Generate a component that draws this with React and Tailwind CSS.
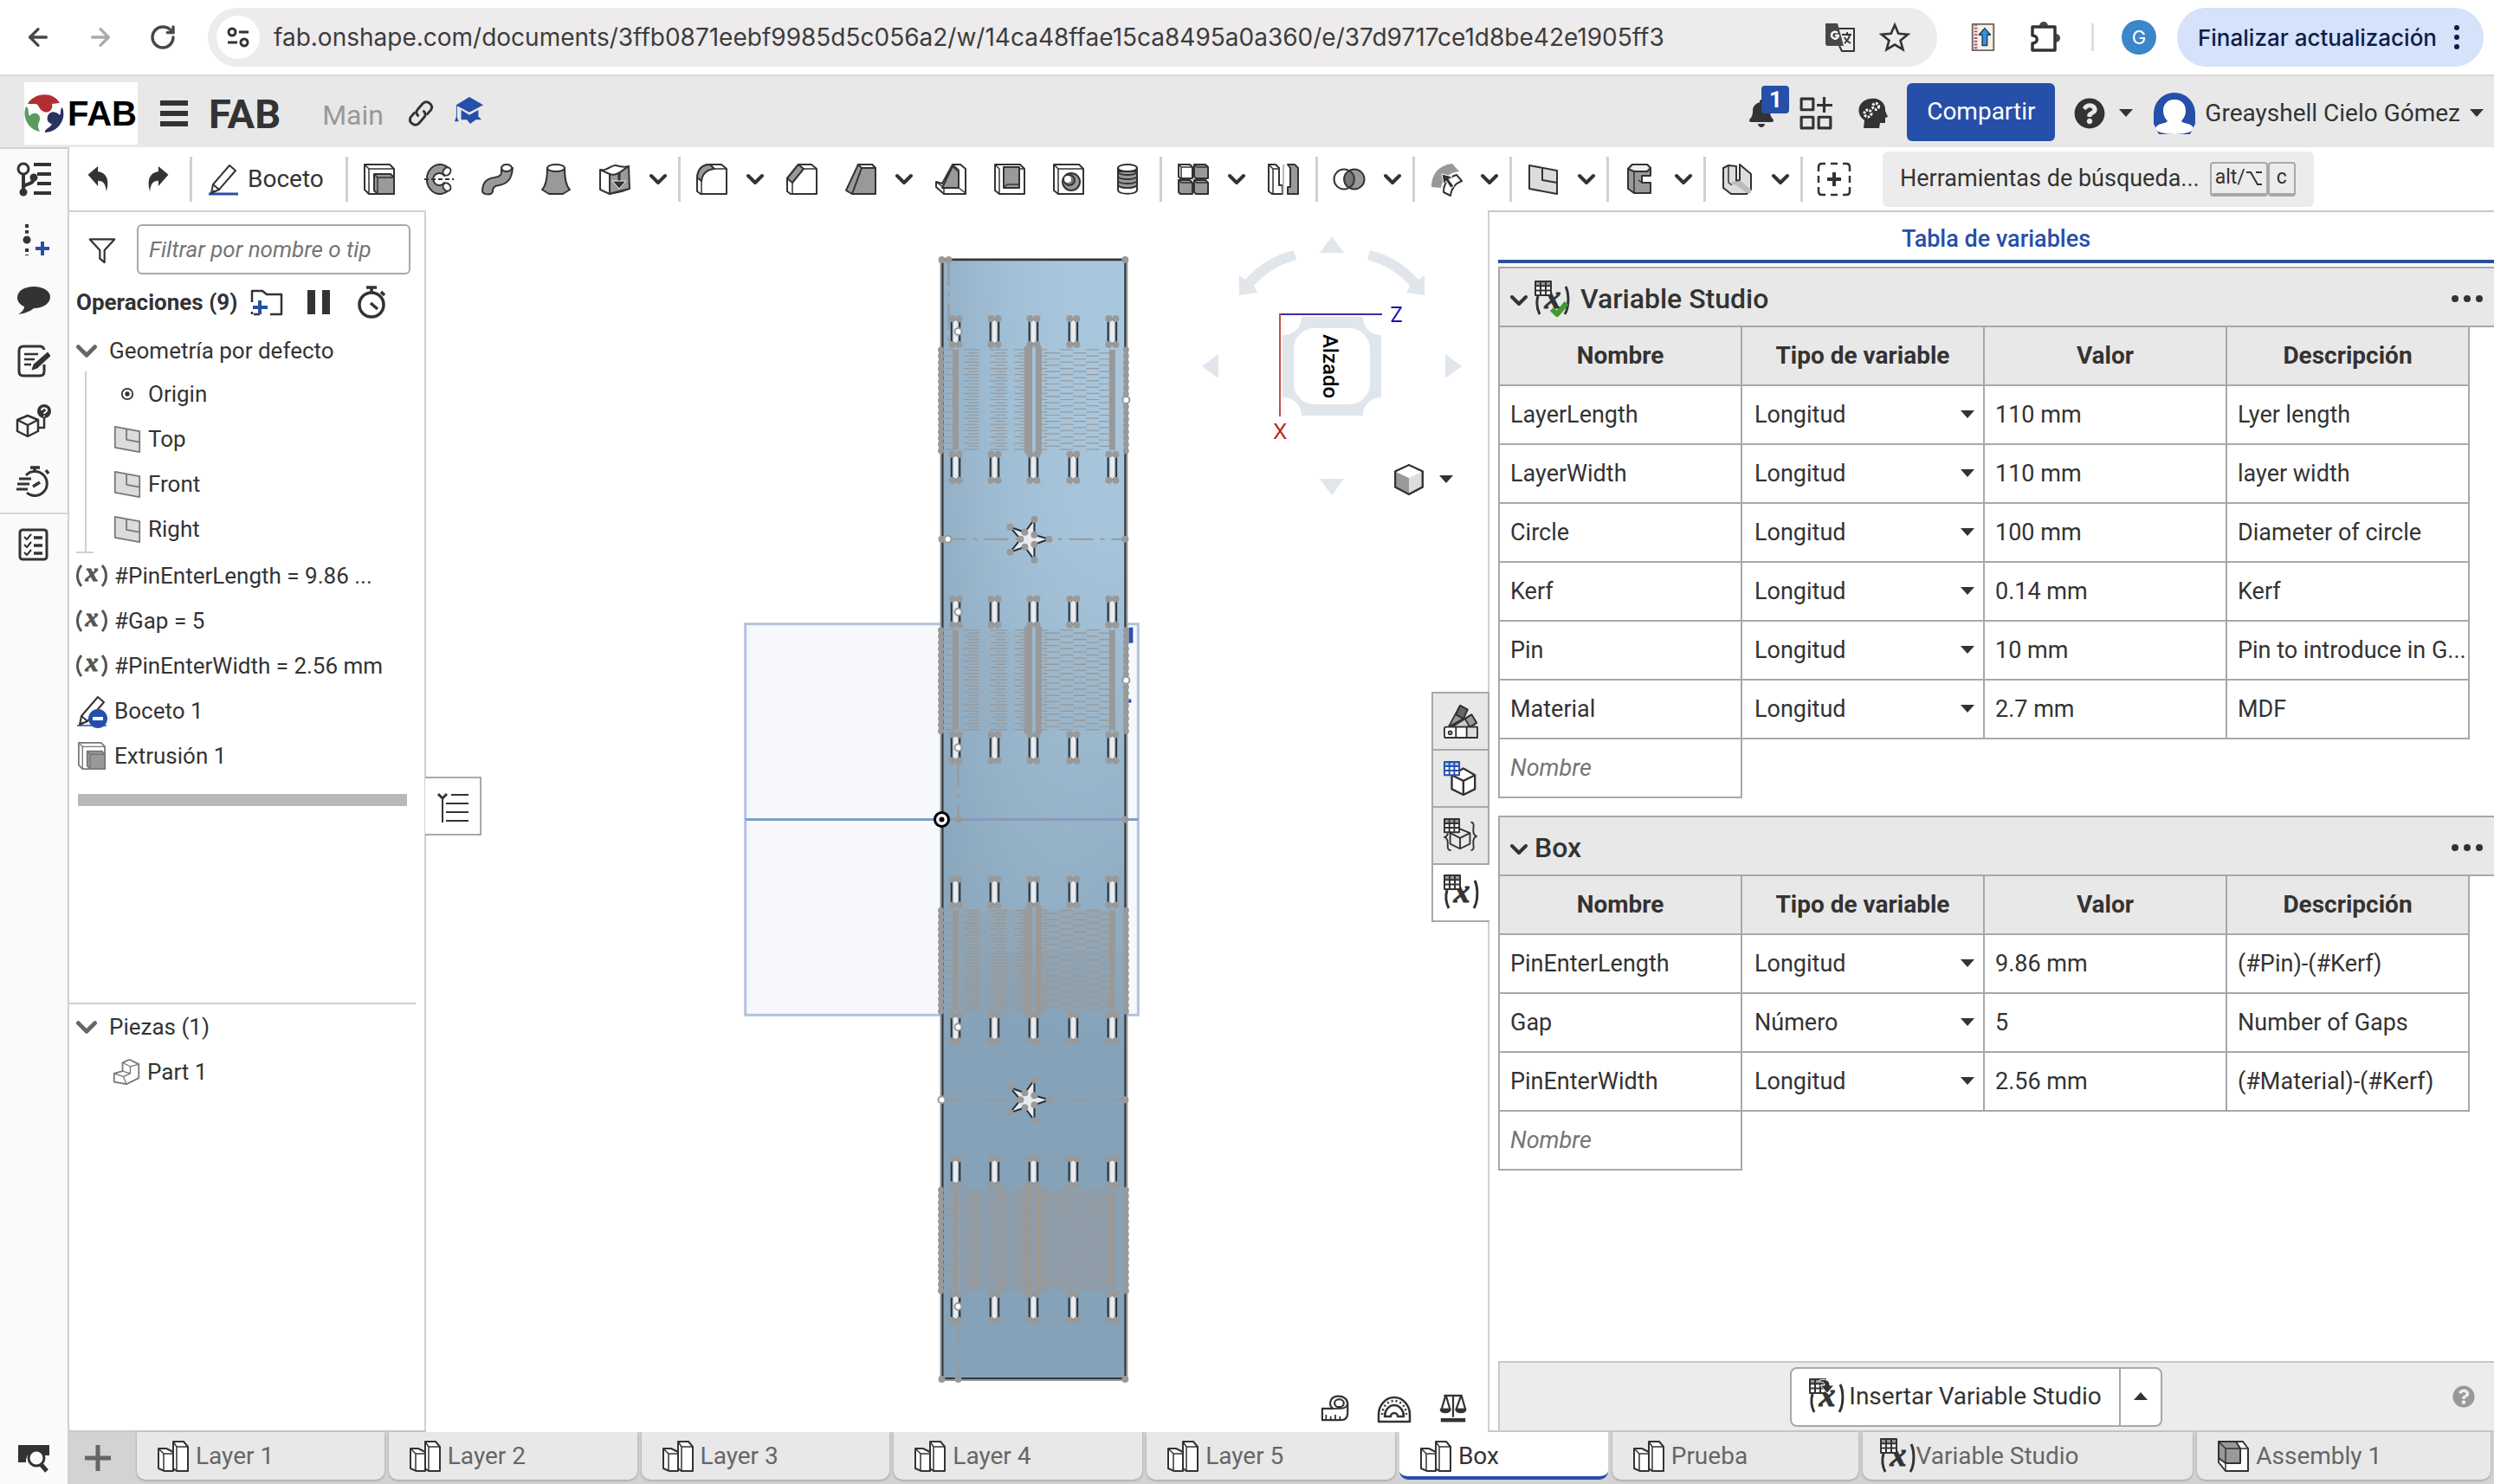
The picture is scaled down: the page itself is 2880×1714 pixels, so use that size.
import React from "react";
import { ArrowLeft, ArrowRight, RotateCw } from "lucide-react";
import { FaBell, FaQuestionCircle } from "react-icons/fa";

const INK = "#333333";

/* ---------- small shared glyphs ---------- */

function Icon({ box = "0 0 36 36", className = "size-9", sw = 2, children }) {
  return (
    <svg viewBox={box} className={`${className} shrink-0 overflow-visible`} fill="none" stroke={INK} strokeWidth={sw} strokeLinejoin="round" aria-hidden="true">
      {children}
    </svg>
  );
}

function Caret({ up = false }) {
  return (
    <svg viewBox="0 0 16 10" className="h-[10px] w-4 shrink-0" fill={INK} aria-hidden="true">
      <path d={up ? "M0 9 8 0l8 9z" : "M0 0h16L8 9z"} />
    </svg>
  );
}

function Chevron({ className = "w-5", color = INK }) {
  return (
    <svg viewBox="0 0 20 14" className={`${className} shrink-0`} fill="none" stroke={color} strokeWidth="4" strokeLinecap="round" strokeLinejoin="round" aria-hidden="true">
      <path d="M2 3l8 8 8-8" />
    </svg>
  );
}

function XGlyph() {
  return (
    <svg viewBox="0 0 36 36" className="size-9 shrink-0 overflow-visible" fill="none" stroke="#555" strokeWidth="3" aria-hidden="true">
      <path d="M6 6C0 13 0 23 6 30M30 6c6 7 6 17 0 24" />
      <text x="18" y="24" textAnchor="middle" fontFamily="Liberation Serif, serif" fontStyle="italic" fontWeight="700" fontSize="30" fill="#555" stroke="#555" strokeWidth="1">x</text>
    </svg>
  );
}

function Grid({ blue = false }) {
  const c = blue ? "#264faa" : INK;
  return (
    <g>
      <rect x="1" y="1" width="18" height="16" fill="#fff" stroke="none" />
      <rect x="1" y="1" width="18" height="5" fill={blue ? "#9fc4f7" : "#999"} stroke="none" />
      <path d="M1 1h18v16H1zM1 6.300h18M1 11.600h18M7 1v16M13 1v16" stroke={c} strokeWidth="2" />
    </g>
  );
}

function VarStudioIcon({ check = false, insert = false }) {
  return (
    <Icon box="0 0 42 42" className="size-[42px]" sw={3}>
      <path d="M4 18c-2 7-1 15 2 21M36 7c4 8 4 24-1 32" />
      <text x="21" y="32" textAnchor="middle" fontFamily="Liberation Serif, serif" fontStyle="italic" fontWeight="700" fontSize="38" fill={INK} stroke={INK} strokeWidth="1">x</text>
      <Grid />
      {insert && <path d="M12 2c8-2 12 1 12 6h5l-8 9-8-9h5c0-3-2-4-6-4z" fill={INK} stroke="#fff" strokeWidth="1" />}
      {check && <path d="M20 33l6 6 11-13" stroke="#3f9a2f" strokeWidth="6" />}
    </Icon>
  );
}

function PlaneIcon({ className = "size-9", color = INK }) {
  return (
    <Icon className={className}>
      <g stroke={color}>
        <path d="M2 2l32 6v27L2 29z" fill="#dcdcdc" />
        <path d="M17 5v14l17 3" />
      </g>
    </Icon>
  );
}

function ExtrudeIcon({ className = "size-9", color = INK }) {
  return (
    <Icon className={className}>
      <g stroke={color}>
        <path d="M1 1h29l5 5v29H6l-5-5z" fill="#fff" />
        <path d="M1 1l5 5h29M6 6v29" strokeWidth="1.500" />
        <path d="M12 12h19l4 4v19H16l-4-4z" fill="#999" />
        <path d="M12 12l4 4h19M16 16v19" strokeWidth="1.500" />
      </g>
    </Icon>
  );
}

function PencilIcon({ badge = false }) {
  return (
    <Icon>
      <path d="M1 35h34" stroke="#264faa" strokeWidth={badge ? 1.5 : 3} />
      <path d="M6 24L25 2l7 6-19 22-9 4z" fill="#fff" />
      <path d="M6 24l7 6M4 34l4-3" />
      {badge && (
        <g stroke="none">
          <circle cx="25" cy="27" r="11" fill="#264faa" />
          <rect x="19" y="25" width="12" height="4" fill="#fff" />
        </g>
      )}
    </Icon>
  );
}

function PartStudioIcon() {
  return (
    <Icon>
      <path d="M1 9h9l8 4v22H8l-7-3z" fill="#fff" />
      <path d="M1 9l6 6h10M7 15v19" strokeWidth="1.500" />
      <path d="M18 1h12l5 6v28H22l-4-3z" fill="#fff" />
      <path d="M18 1l4 6h12M22 7v28" strokeWidth="1.500" />
    </Icon>
  );
}

const cube = "M18 2l15 7v17l-15 8-15-8V9z";

/* ---------- toolbar ---------- */

const tools = {
  revolve: (
    <>
      <path d="M32 8A15 17 0 1 0 32 28L25 22a7 7 0 1 1 0-8z" fill="#999" />
      <ellipse cx="28" cy="9" rx="4" ry="5" transform="rotate(40 28 9)" fill="#fff" />
      <ellipse cx="28" cy="27" rx="4" ry="5" transform="rotate(-40 28 27)" fill="#fff" />
      <path d="M2 18h34" strokeDasharray="5 3" />
    </>
  ),
  sweep: (
    <>
      <path d="M23 5v5c0 4-3 5-8 6C6 17 1 22 1 32c1 4 11 5 12 0 0-5 2-6 7-7 11-2 15-8 16-20z" fill="#999" />
      <ellipse cx="29" cy="5" rx="6" ry="4" fill="#fff" />
    </>
  ),
  loft: (
    <>
      <path d="M8 5c0 12-2 21-6 25l8 5h16l8-5C30 26 28 17 28 5z" fill="#999" />
      <ellipse cx="18" cy="5" rx="10" ry="4" fill="#fff" />
    </>
  ),
  import: (
    <>
      <path d="M1 7c7 3 13-6 18-5s10 3 15 1v26l-8 3-14 3-11-5z" fill="#fff" />
      <path d="M12 12c8 3 14-4 22-9l1 26c-8 2-15 3-23 6z" fill="#999" />
      <path d="M1 7l11 5" />
      <path d="M23 10v15" strokeWidth="3" />
      <path d="M15 20h16l-8 9z" fill={INK} stroke="#fff" strokeWidth="1" />
    </>
  ),
  fillet: (
    <>
      <path d="M1 16C2 6 7 1 16 1h13l6 5v29H5l-4-3z" fill="#fff" />
      <path d="M1 16C2 6 7 1 16 1l5 5C12 7 7 12 6 20z" fill="#999" />
      <path d="M21 6h14M6 20v15" strokeWidth="1.500" />
    </>
  ),
  chamfer: (
    <>
      <path d="M1 17L14 1h15l6 5v29H5l-4-3z" fill="#fff" />
      <path d="M1 17L14 1l6 5L7 22z" fill="#999" />
      <path d="M20 6h15M7 22v13" strokeWidth="1.500" />
    </>
  ),
  draft: (
    <>
      <path d="M15 1h16l4 4v30H8l-7-4z" fill="#999" />
      <path d="M15 1h16l4 4H19z" fill="#fff" />
      <path d="M19 5L8 35" />
    </>
  ),
  rib: (
    <>
      <path d="M20 1h9l6 5v29H10l-9-8v-6l7 2z" fill="#fff" />
      <path d="M20 3l7 6v19H8z" fill="#999" />
      <path d="M1 21l9 7h17M10 28v7M27 28V7l-7-6M27 28l8 6" strokeWidth="1.500" />
    </>
  ),
  shell: (
    <>
      <path d="M1 1h29l5 5v29H6l-5-4z" fill="#fff" />
      <path d="M1 1l5 5v29M29 6h6" strokeWidth="1.500" />
      <path d="M11 4h18v24H11z" fill="#999" />
      <path d="M11 28l4-4h14" strokeWidth="1.500" />
    </>
  ),
  hole: (
    <>
      <path d="M1 1h29l5 5v29H6l-5-4z" fill="#fff" />
      <path d="M1 1l5 5h29M6 6v29" strokeWidth="1.500" />
      <circle cx="21" cy="21" r="10" fill="#999" />
      <circle cx="19" cy="19" r="6" fill="#777" />
      <circle cx="17" cy="18" r="4" fill="#fff" stroke="none" />
    </>
  ),
  thread: (
    <>
      <path d="M7 5v26c2 5 20 5 22 0V5z" fill="#fff" />
      <path d="M7 9v16c3 4 19 4 22 0V9z" fill="#999" />
      <ellipse cx="18" cy="5" rx="11" ry="4" fill="#fff" />
      <path d="M7 10c3 4 19 4 22 0M7 15c3 4 19 4 22 0M7 20c3 4 19 4 22 0M7 25c3 4 19 4 22 0" />
    </>
  ),
  pattern: (
    <>
      <path d="M1 1h13l3 3v13H3l-2-2z" fill="#fff" />
      <path d="M19 1h13l3 3v13H21l-2-2zM1 19h13l3 3v13H3l-2-2zM19 19h13l3 3v13H21l-2-2z" fill="#999" />
      <path d="M1 1l3 3h13M4 4v12M19 1l3 3h13M1 19l3 3h13M19 19l3 3h13" strokeWidth="1.500" />
    </>
  ),
  mirror: (
    <>
      <path d="M1 1h8l4 4v20h4v10H5l-4-3z" fill="#fff" />
      <path d="M1 1l5 5v29M6 6h7" strokeWidth="1.500" />
      <path d="M23 1h8l4 4v30H23v-8h3V5z" fill="#999" />
      <path d="M18 1v34" stroke="#bbb" />
    </>
  ),
  boolean: (
    <>
      <circle cx="12" cy="18" r="11.500" fill="#fff" />
      <circle cx="24" cy="18" r="11.500" fill="#999" />
      <path d="M18 8a11.500 11.500 0 0 1 0 20 11.500 11.500 0 0 1 0-20z" fill="#777" />
    </>
  ),
  moveFace: (
    <>
      <path d="M1 27C1 12 9 2 25 0l8 9C22 10 14 17 12 28z" fill="#999" stroke="none" />
      <path d="M15 33c0-10 5-17 15-20l6 7c-8 3-12 8-13 17z" fill="#fff" />
      <path d="M13 12l12 3-4 3 6 8-4 2-5-8-3 4z" fill={INK} stroke="#fff" strokeWidth="1" />
    </>
  ),
  frame: (
    <>
      <path d="M4 6l5-5h17l4 4v9H20v8h10v12H11l-7-5z" fill="#999" />
      <path d="M4 6l5-5h17l4 4-4 4H11z" fill="#eee" />
      <path d="M11 9v26M20 22l-4-3" strokeWidth="1.500" />
    </>
  ),
  sheet: (
    <>
      <path d="M2 5l6-3 9 1v17l4-1V1l13 11v18l-5 5H11L2 28z" fill="#ddd" />
      <path d="M8 3v19l13-3 13 11v4h-5L17 25l-9-3z" fill="#bbb" stroke="none" />
      <path d="M8 3v19l4 3M21 19l-4 1M21 1v18" strokeWidth="1.500" />
    </>
  ),
};

function Tool({ name, label, children }) {
  return (
    <button type="button" aria-label={label} className="flex h-full w-[68px] shrink-0 items-center justify-center">
      {children ?? <Icon>{tools[name]}</Icon>}
    </button>
  );
}

function Drop({ label = "Más opciones" }) {
  return (
    <button type="button" aria-label={label} className="flex h-full w-9 shrink-0 items-center justify-center pr-1">
      <Chevron />
    </button>
  );
}

function Sep() {
  return (
    <div className="flex h-[52px] w-2 shrink-0 justify-center">
      <div className="w-[3px] bg-[#d0d0d0]" />
    </div>
  );
}

function Toolbar() {
  return (
    <div className="flex h-[73px] shrink-0 items-center bg-white text-[28px] text-[#333]">
      <Tool label="Deshacer">
        <Icon sw={0} className="size-8">
          <path d="M4 12L17 1v7c12 2 15 12 11 26-1-10-4-14-11-14v7z" fill={INK} />
        </Icon>
      </Tool>
      <Tool label="Rehacer">
        <Icon sw={0} className="size-8">
          <path d="M32 12L19 1v7C7 10 4 20 8 34c1-10 4-14 11-14v7z" fill={INK} />
        </Icon>
      </Tool>
      <Sep />
      <button type="button" className="flex h-full w-[172px] shrink-0 items-center gap-[10px] pl-4">
        <PencilIcon />
        Boceto
      </button>
      <Sep />
      <Tool label="Extruir"><ExtrudeIcon /></Tool>
      <Tool name="revolve" label="Revolución" />
      <Tool name="sweep" label="Barrido" />
      <Tool name="loft" label="Solevación" />
      <Tool name="import" label="Engrosar" />
      <Drop />
      <Sep />
      <Tool name="fillet" label="Empalme" />
      <Drop />
      <Tool name="chamfer" label="Chaflán" />
      <Tool name="draft" label="Ángulo de salida" />
      <Drop />
      <Tool name="rib" label="Nervio" />
      <Tool name="shell" label="Vaciado" />
      <Tool name="hole" label="Taladro" />
      <Tool name="thread" label="Rosca" />
      <Sep />
      <Tool name="pattern" label="Matriz" />
      <Drop />
      <Tool name="mirror" label="Simetría" />
      <Sep />
      <Tool name="boolean" label="Booleana" />
      <Drop />
      <Sep />
      <Tool name="moveFace" label="Mover cara" />
      <Drop />
      <Sep />
      <Tool label="Plano"><PlaneIcon /></Tool>
      <Drop />
      <Sep />
      <Tool name="frame" label="Viga" />
      <Drop />
      <Sep />
      <Tool name="sheet" label="Chapa metálica" />
      <Drop />
      <Sep />
      <Tool label="Añadir operación personalizada">
        <Icon box="0 0 40 40" className="size-10" sw={3}>
          <path d="M2 11V6q0-4 4-4h4M16 2h8M30 2h4q4 0 4 4v5M38 16v8M38 29v5q0 4-4 4h-4M24 38h-8M10 38H6q-4 0-4-4v-5M2 24v-8" strokeWidth="2.500" />
          <path d="M12 20h16M20 12v16" strokeWidth="4" />
        </Icon>
      </Tool>
      <button type="button" className="ml-[22px] flex h-16 w-[498px] shrink-0 items-center whitespace-nowrap rounded-md bg-[#ececec] pl-5 text-[27px]">
        <span>Herramientas de búsqueda...</span>
        <kbd className="ml-3 flex h-10 items-center rounded border-2 border-b-4 border-[#a8a8a8] px-1 font-[Roboto,sans-serif] text-[23px]">
          alt/
          <Icon box="0 0 20 20" className="size-5">
            <path d="M1 3h5l8 14h5M12 3h7" />
          </Icon>
        </kbd>
        <kbd className="flex h-10 w-8 items-center justify-center rounded border-2 border-b-4 border-[#a8a8a8] font-[Roboto,sans-serif] text-[23px]">c</kbd>
      </button>
    </div>
  );
}

/* ---------- browser chrome and document header ---------- */

function BrowserBar() {
  return (
    <div className="flex h-[88px] shrink-0 items-center border-b-2 border-[#dadada] bg-white font-[Inter,sans-serif]">
      <nav className="flex items-center gap-10 pl-7" aria-label="Navegador">
        <button type="button" aria-label="Atrás"><ArrowLeft className="size-8 text-[#474747]" strokeWidth={2.5} /></button>
        <button type="button" aria-label="Adelante"><ArrowRight className="size-8 text-[#aaa]" strokeWidth={2.5} /></button>
        <button type="button" aria-label="Recargar"><RotateCw className="size-8 text-[#474747]" strokeWidth={2.5} /></button>
      </nav>
      <div className="ml-9 flex h-[68px] grow items-center rounded-full bg-[#edebec] pl-[10px] pr-8">
        <button type="button" aria-label="Información del sitio" className="flex size-[50px] items-center justify-center rounded-full bg-white">
          <Icon box="0 0 26 26" className="size-[26px]" sw={3}>
            <circle cx="6" cy="7" r="4" />
            <path d="M14 7h11M1 19h11" />
            <circle cx="20" cy="19" r="4" />
          </Icon>
        </button>
        <input
          aria-label="Dirección"
          className="ml-4 min-w-0 grow bg-transparent text-[28px] text-[#3c3c3c] outline-none"
          defaultValue="fab.onshape.com/documents/3ffb0871eebf9985d5c056a2/w/14ca48ffae15ca8495a0a360/e/37d9717ce1d8be42e1905ff3"
        />
        <button type="button" aria-label="Traducir" className="mr-7">
          <Icon>
            <path d="M16 8h18v26H20l-3-6" />
            <path d="M1 2h14l7 26H4q-3 0-3-3z" fill="#474747" stroke="none" />
            <path d="M15 13a4 4 0 1 0 1 3h-4" stroke="#fff" strokeWidth="2.500" />
            <path d="M20 15h11M26 12v3M29 15c-1 6-4 8-6 10M23 18c1 3 4 5 7 7" strokeWidth="1.800" />
          </Icon>
        </button>
        <button type="button" aria-label="Añadir a favoritos">
          <Icon className="size-[34px]" sw={2.800}>
            <path d="M18 3l4.500 10.500L34 14.500l-9 7.500 3 11-10-6-10 6 3-11-9-7.500 11.500-1z" strokeLinejoin="miter" />
          </Icon>
        </button>
      </div>
      <button type="button" aria-label="Extensión" className="ml-9">
        <Icon className="size-[34px]">
          <path d="M5 2h26v32H5z" fill="#f7f1df" stroke="#666" />
          <path d="M9 2v32" stroke="#b14d7b" strokeDasharray="2 2" strokeWidth="4" />
          <path d="M20 7l7 8h-4v13h-6V15h-4z" fill="#3d8fe0" stroke="#1c3d6b" strokeWidth="1.500" />
        </Icon>
      </button>
      <button type="button" aria-label="Extensiones" className="ml-9">
        <Icon className="size-9" sw={3.500}>
          <path d="M4 6h26v27H4v-8c7 0 7-9 0-9z" />
          <path d="M12 5a5 5 0 0 1 10 0zM31 14a5 5 0 0 1 0 10z" fill="#474747" stroke="none" />
        </Icon>
      </button>
      <div className="ml-9 h-8 w-[3px] bg-[#dedede]" />
      <button type="button" aria-label="Perfil" className="ml-8 flex size-10 items-center justify-center rounded-full bg-[#3c86cc] text-[22px] text-white">G</button>
      <button type="button" className="ml-6 mr-3 flex h-[68px] items-center gap-5 whitespace-nowrap rounded-full bg-[#d6e1fa] pl-6 pr-7 text-[26px] font-medium text-[#0b1d4a]">
        Finalizar actualización
        <svg viewBox="0 0 6 28" className="h-7 w-[6px]" fill="#0b1d4a" aria-hidden="true">
          <circle cx="3" cy="3" r="3" /><circle cx="3" cy="14" r="3" /><circle cx="3" cy="25" r="3" />
        </svg>
      </button>
    </div>
  );
}

function DocumentHeader() {
  return (
    <header className="flex h-[82px] shrink-0 items-center bg-[#e8e8e8] pt-1 text-[#333]">
      <a href="#inicio" aria-label="Fab" className="ml-7 flex h-[72px] w-[131px] shrink-0 items-center bg-white">
        <svg viewBox="0 0 46 46" className="size-[46px] shrink-0" aria-hidden="true">
          <circle cx="23" cy="23" r="22" fill="#fff" />
          <path d="M4 12C12-2 34-2 41 11l-9 1c2 8-6 12-11 8-5-3-4-9-9-8z" fill="#b02f33" />
          <path d="M2 15c4 1 2 8 4 11 5-6 13-3 12 4-1 5-4 6 0 14C5 42-3 28 2 15z" fill="#5d9a5f" />
          <path d="M44 16c5 13-4 28-20 29-1-4 6-5 8-10-6-1-7-8-3-12 5-4 10 0 12 2 2-3 0-7 3-9z" fill="#27325f" />
        </svg>
        <span className="pl-1 font-[Liberation_Sans,sans-serif] text-[40px] font-bold leading-none text-black">FAB</span>
      </a>
      <button type="button" aria-label="Menú" className="ml-[26px] flex w-8 shrink-0 flex-col gap-[6px]">
        <span className="h-[6px] bg-[#333]" />
        <span className="h-[6px] bg-[#333]" />
        <span className="h-[6px] bg-[#333]" />
      </button>
      <h1 className="ml-6 text-[47px] font-bold leading-none">FAB</h1>
      <span className="ml-12 pt-1 text-[32px] text-[#999]">Main</span>
      <button type="button" aria-label="Enlace" className="ml-7">
        <Icon className="size-[30px]" sw={3.500}>
          <path d="M15 22c-4-3-4-7-1-10l7-8c6-5 15 2 11 9l-6 7" />
          <path d="M21 14c4 3 4 7 1 10l-7 8c-6 5-15-2-11-9l6-7" />
        </Icon>
      </button>
      <button type="button" aria-label="Aprendizaje" className="ml-6 pb-2">
        <Icon className="size-[34px]" sw={0}>
          <path d="M18 2l17 10-17 9L3 13v14l2 5H0l2-6V12zM8 18l10 6 11-6v8l4 4h-7l-7 5-4-5H8z" fill="#264faa" />
        </Icon>
      </button>

      <div className="ml-auto flex items-center">
        <button type="button" aria-label="Notificaciones, 1 nueva" className="relative mr-5">
          <FaBell className="size-8" />
          <span className="absolute -top-4 left-4 flex h-8 w-8 items-center justify-center rounded bg-[#264faa] text-[26px] font-bold text-white">1</span>
        </button>
        <button type="button" aria-label="Aplicaciones" className="ml-2 mr-7">
          <Icon className="size-[38px]" sw={3}>
            <path d="M2 2h13v12H2zM2 22h13v12H2zM21 22h13v12H21zM27 0v17M19 9h17" />
          </Icon>
        </button>
        <button type="button" aria-label="Asistente" className="mr-[22px]">
          <Icon className="size-9" sw={0}>
            <path d="M16 1C27-1 34 7 33 15l3 7-3 1v6h-6l-1 6H8l1-9C-3 17 3 2 16 1z" fill={INK} />
            <circle cx="13" cy="18" r="4" stroke="#fff" strokeWidth="3" strokeDasharray="2.500 1.500" />
            <circle cx="22" cy="10" r="3.500" stroke="#fff" strokeWidth="3" strokeDasharray="2.500 1.500" />
          </Icon>
        </button>
        <button type="button" className="mb-1 h-[67px] w-[171px] rounded-md bg-[#264faa] text-[28px] text-white">Compartir</button>
        <button type="button" aria-label="Ayuda" className="ml-[22px] flex items-center gap-4">
          <FaQuestionCircle className="size-9" />
          <Caret />
        </button>
        <button type="button" className="ml-6 mr-3 flex items-center gap-[11px] whitespace-nowrap text-[28px]">
          <svg viewBox="0 0 48 48" className="size-12" aria-hidden="true">
            <path d="M0 48V24a24 24 0 0 1 48 0v24z" fill="#264faa" />
            <path d="M24 8c9 0 13 6 13 13 0 6-3 9-5 12 2 3 12 2 14 8 0 4-9 7-22 7S2 45 2 41c2-6 12-5 14-8-2-3-5-6-5-12C11 14 15 8 24 8z" fill="#fff" />
            <path d="M0 36v12h6zM48 36v12h-6z" fill="#e8e8e8" />
          </svg>
          Greayshell Cielo Gómez
          <Caret />
        </button>
      </div>
    </header>
  );
}

/* ---------- left rail ---------- */

function RailButton({ label, children }) {
  return (
    <button type="button" aria-label={label} className="flex h-[70px] w-full shrink-0 items-center justify-center">
      <Icon className="size-10" box="0 0 40 40" sw={3}>{children}</Icon>
    </button>
  );
}

function Rail() {
  return (
    <aside className="flex w-20 shrink-0 flex-col border-r-2 border-t-2 border-[#d0d0d0] bg-[#fafafa]">
      <RailButton label="Árbol">
        <circle cx="8" cy="8" r="6" />
        <path d="M8 14v20M8 30c0-6 12-2 12-12M20 3h20M24 14h16M24 25h16M20 36h20" strokeWidth="4" />
        <circle cx="8" cy="35" r="3" fill={INK} />
        <circle cx="20" cy="18" r="3" fill={INK} />
      </RailButton>
      <RailButton label="Crear versión">
        <path d="M12 2v36" strokeDasharray="4 3" strokeWidth="4" />
        <circle cx="12" cy="20" r="6" fill={INK} stroke="#fafafa" />
        <path d="M22 30h16M30 22v16" stroke="#264faa" strokeWidth="4" />
      </RailButton>
      <RailButton label="Comentarios">
        <path d="M20 4c11 0 19 5 19 12s-8 13-19 13c-3 3-10 6-18 7 5-3 7-6 7-9-5-2-8-6-8-10C1 9 9 4 20 4z" fill={INK} stroke="none" />
      </RailButton>
      <RailButton label="Notas">
        <path d="M32 24v8q0 5-5 5H8q-5 0-5-5V8q0-5 5-5h19q4 0 5 4" />
        <path d="M9 12h16M9 18h12M9 24h8" strokeWidth="2.500" />
        <path d="M36 10l3 4-15 14-6 2 2-6z" fill={INK} strokeWidth="1" />
      </RailButton>
      <RailButton label="Ayuda de pieza">
        <path d="M13 13l12 5v13l-12 6-12-6V18zM1 18l12 6 12-6M13 24v13" strokeWidth="2.500" />
        <circle cx="32" cy="8" r="8" fill={INK} stroke="none" />
        <path d="M29 7c0-4 7-3 6 0 0 2-3 2-3 4M32 13v1" stroke="#fff" strokeWidth="2" />
        <path d="M32 16v11h-6" strokeWidth="2.500" />
      </RailButton>
      <RailButton label="Rendimiento">
        <path d="M11 12a14 14 0 1 1 1 20M3 16h14M1 22h14M0 28h13" />
        <path d="M16 3h11M21 3v5M34 6l3 4M19 25l8-5" strokeWidth="3.500" />
      </RailButton>
      <div className="border-b-2 border-[#d8d8d8]" />
      <RailButton label="Lista de comprobación">
        <rect x="4" y="3" width="31" height="34" rx="3" />
        <path d="M9 11l3 3 5-6M9 20l3 3 5-6M9 29l3 3 5-6" strokeWidth="2" />
        <path d="M20 12h10M20 21h10M20 30h10" strokeWidth="3.500" />
      </RailButton>
      <div className="mt-auto pt-2">
        <RailButton label="Buscar en el espacio de trabajo">
          <path d="M2 10h36v12h-5a12 12 0 0 0-22 8H2z" fill={INK} stroke="none" />
          <circle cx="23" cy="25" r="9" />
          <path d="M28 32l7 8" strokeWidth="5" />
        </RailButton>
      </div>
    </aside>
  );
}

/* ---------- feature panel ---------- */

function Feature({ icon, children }) {
  return (
    <li className="flex h-[52px] items-center gap-2 whitespace-nowrap">
      {icon}
      <span>{children}</span>
    </li>
  );
}

function FeaturePanel() {
  return (
    <section className="flex w-[412px] shrink-0 flex-col border-y-2 border-r-2 border-[#d0d0d0] border-b-[#c8c8c8] bg-white text-[26px] text-[#333]">
      <div className="flex items-center gap-6 pl-[22px] pr-4 pt-[14px]">
        <Icon className="size-8">
          <path d="M2 5h32L21 19v16l-6-5V19z" strokeWidth="2.500" />
        </Icon>
        <input
          aria-label="Filtrar por nombre o tipo"
          placeholder="Filtrar por nombre o tipo"
          className="h-[58px] min-w-0 grow rounded-md border-2 border-[#a8a8a8] bg-white pl-3 pr-11 text-[26px] italic placeholder:text-[#757575]"
        />
      </div>
      <div className="flex h-16 items-center pl-2">
        <h2 className="text-[26px] font-bold">Operaciones (9)</h2>
        <button type="button" aria-label="Nueva carpeta" className="ml-4">
          <Icon className="size-9" sw={2.500}>
            <path d="M1 18V5h12l5 4h17v23H22M1 32v-3M10 32h-7" />
            <path d="M2 24h17M10 16v16" stroke="#264faa" strokeWidth="4" />
          </Icon>
        </button>
        <button type="button" aria-label="Pausar" className="ml-[29px] flex gap-2">
          <span className="h-[28px] w-[9px] bg-[#333]" />
          <span className="h-[28px] w-[9px] bg-[#333]" />
        </button>
        <button type="button" aria-label="Tiempos" className="ml-7">
          <Icon className="size-10" box="0 0 40 40" sw={3.500}>
            <circle cx="20" cy="23" r="14" />
            <path d="M14 3h12M20 3v6M31 8l4 4M19 21l8 7" />
          </Icon>
        </button>
      </div>
      <ul className="pl-2">
        <li>
          <div className="flex h-12 items-center gap-[14px]">
            <Chevron className="w-6" color="#666" />
            <span>Geometría por defecto</span>
          </div>
          <ul className="ml-[10px] border-l-2 border-[#d0d0d0] pl-[31px]">
            <Feature
              icon={
                <Icon className="size-8" sw={2}>
                  <circle cx="18" cy="18" r="7" /><circle cx="18" cy="18" r="2" fill={INK} />
                </Icon>
              }
            >
              Origin
            </Feature>
            <Feature icon={<PlaneIcon className="size-8" color="#777" />}>Top</Feature>
            <Feature icon={<PlaneIcon className="size-8" color="#777" />}>Front</Feature>
            <Feature icon={<PlaneIcon className="size-8" color="#777" />}>Right</Feature>
          </ul>
          <div className="w-5 border-t-2 border-[#d0d0d0]" />
        </li>
        <Feature icon={<XGlyph />}>#PinEnterLength = 9.86 ...</Feature>
        <Feature icon={<XGlyph />}>#Gap = 5</Feature>
        <Feature icon={<XGlyph />}>#PinEnterWidth = 2.56 mm</Feature>
        <Feature icon={<PencilIcon badge />}>Boceto 1</Feature>
        <Feature icon={<ExtrudeIcon className="mx-[2px] size-8" color="#777" />}>Extrusión 1</Feature>
      </ul>
      <div className="ml-[10px] mr-5 mt-[18px] h-[14px] bg-[#b8b8b8]" />
      <div className="mr-[10px] mt-auto h-[494px] border-t-2 border-[#d0d0d0] pl-2">
        <div className="flex h-[52px] items-center gap-[14px]">
          <Chevron className="w-6" color="#666" />
          <h2>Piezas (1)</h2>
        </div>
        <div className="flex h-[52px] items-center gap-2 pl-[42px]">
          <Icon className="size-8">
            <path d="M2 20l11-3V6l9-4 12 6v18L18 34 2 31z" stroke="#777" />
            <path d="M13 6l10 5 11-3M23 11v9l-10-3M23 20L14 24 2 20M14 24l4 10" stroke="#777" strokeWidth="1.500" />
          </Icon>
          <span>Part 1</span>
        </div>
      </div>
    </section>
  );
}

/* ---------- 3D canvas ---------- */

const SLOT_X = [1104, 1149, 1194, 1240, 1285];
const BANDS = [367, 691, 1015, 1338];
const HANDLES = [[1107, 382], [1301, 461], [1095, 622], [1107, 706], [1301, 785], [1107, 863], [1107, 1186], [1088, 1270], [1107, 1509]];
const CORNERS = [[1088, 299], [1096, 299], [1300, 299], [1088, 1593], [1107, 1593], [1300, 1593], [1300, 622], [1300, 946], [1300, 1270], [1107, 946], [1088, 622]];
const STAR_OUT = [[8, -23], [-20, -14], [-20, 15], [8, 24], [25, 0]];
const STAR_IN = [[-3, -8], [-8, 0], [-3, 9], [8, 6], [8, -5]];

function Slot({ x, y }) {
  return (
    <g>
      <rect x={x - 5} y={y} width="10" height="30" fill="#5f7584" />
      <path d={`M${x - 5} ${y}v30M${x + 5} ${y}v30`} stroke="#1f2a33" strokeWidth="1.500" />
      <rect x={x - 3} y={y + 2} width="6" height="26" rx="2" fill="#e9ebee" />
      {[0, 30].map((d) => (
        <g key={d} fill="#999">
          <circle cx={x - 4} cy={y + d} r="4" />
          <circle cx={x + 4} cy={y + d} r="4" />
        </g>
      ))}
    </g>
  );
}

function Band({ y, density }) {
  const rows = Array.from({ length: 33 }, (_, i) => i);
  return (
    <g stroke="#999" strokeWidth={1.2 + density * 0.5}>
      <rect x="1110" y={y} width="172" height="116" fill="#999" stroke="none" opacity={density * 0.25} />
      {rows.map((i) => {
        const r = y + i * 3.6;
        return i % 2 === 0 ? (
          <path key={i} d={`M1092 ${r}h10M1113 ${r}h18M1144 ${r}h20M1172 ${r}h14M1203 ${r}h7M1225 ${r}h15M1255 ${r}h15`} />
        ) : (
          <path key={i} d={`M1119 ${r}h12M1150 ${r}h12M1178 ${r}h8M1206 ${r}h19M1240 ${r}h15M1270 ${r}h14`} />
        );
      })}
      <path d={`M1104 ${y}v116`} strokeWidth="7" />
      <path d={`M1188 ${y - 4}v124`} strokeWidth="9" />
      <path d={`M1200 ${y - 4}v124`} strokeWidth="7" />
      <path d={`M1285 ${y}v116`} strokeWidth="7" />
      {[1087, 1301].map((x) => (
        <g key={x}>
          <path d={`M${x} ${y}v116`} strokeWidth="5" />
          <path d={`M${x} ${y}v117`} strokeWidth="7" strokeLinecap="round" strokeDasharray="0.100 7.200" />
        </g>
      ))}
    </g>
  );
}

function Star({ x, y }) {
  const pts = STAR_OUT.flatMap((p, i) => [p, STAR_IN[i]]);
  return (
    <g transform={`translate(${x} ${y})`}>
      <polygon points={pts.map((p) => p.join(",")).join(" ")} fill="#e9ebee" stroke="#22303a" strokeWidth="2" />
      {STAR_OUT.concat(STAR_IN).map(([cx, cy]) => (
        <circle key={`${cx} ${cy}`} cx={cx} cy={cy} r="4" fill="#999" />
      ))}
    </g>
  );
}

function Model() {
  return (
    <svg viewBox="492 243 1227 1410" className="block h-full w-full" role="img" aria-label="Pieza Box">
      <defs>
        <linearGradient id="plateFill" x1="1300" y1="299" x2="1180" y2="1200" gradientUnits="userSpaceOnUse">
          <stop offset="0" stopColor="#a9c8df" />
          <stop offset="0.350" stopColor="#a6c4da" />
          <stop offset="1" stopColor="#86a2b8" />
        </linearGradient>
        <linearGradient id="plateShade" x1="0" x2="1" y1="0" y2="0">
          <stop offset="0" stopColor="#86a2b8" stopOpacity="0.600" />
          <stop offset="1" stopColor="#aecbe0" stopOpacity="0" />
        </linearGradient>
      </defs>
      <rect x="861" y="720" width="454" height="452" fill="#f6f8fb" stroke="#b4c2de" strokeWidth="3" />
      <rect x="1304" y="724" width="5" height="18" fill="#2f4fae" />
      <rect x="1303" y="807" width="4" height="4" fill="#2f4fae" />
      <rect x="1088" y="299" width="213" height="1294" fill="url(#plateFill)" />
      <rect x="1088" y="299" width="213" height="800" fill="url(#plateShade)" />
      <path d="M1088 299h213v1294h-213z" fill="none" stroke="#999" strokeWidth="4" />
      <path d="M1089 299h211v1293h-211z" fill="none" stroke="#2c3a45" strokeWidth="2" />
      <path d="M861 946h454" stroke="#7f9dca" strokeWidth="3" />
      <g stroke="#999" strokeWidth="2">
        <path d="M1088 622h212M1088 1270h212M1095 946h206" strokeDasharray="28 8 5 8" />
        <path d="M1096 299v100M1107 878v68M1107 1525v68" strokeDasharray="30 8 5 8" />
      </g>
      {BANDS.map((y, i) => <Band key={y} y={y + 36} density={[0, 0.3, 1, 1.4][i]} />)}
      {BANDS.map((y) => SLOT_X.map((x) => (
        <g key={`${x} ${y}`}>
          <Slot x={x} y={y} />
          <Slot x={x} y={y + 157} />
        </g>
      )))}
      <Star x={1187} y={622} />
      <Star x={1187} y={1270} />
      {CORNERS.map(([x, y]) => <circle key={`${x} ${y}`} cx={x} cy={y} r="4" fill="#999" />)}
      {HANDLES.map(([x, y]) => <circle key={`${x} ${y}`} cx={x} cy={y} r="4" fill="#fff" stroke="#999" strokeWidth="2" />)}
      <circle cx="1088" cy="946" r="8" fill="#fff" stroke="#000" strokeWidth="3" />
      <circle cx="1088" cy="946" r="3" fill="#000" />
    </svg>
  );
}

function ViewCube() {
  return (
    <svg viewBox="0 0 348 340" className="absolute right-0 top-2 h-[340px] w-[348px]" role="img" aria-label="Vista Alzado">
      <g fill="#e1e6ed">
        <path d="M168 22l14 19h-28zM168 321l14-19h-28zM18 172l19-14v28zM318 172l-19-14v28z" />
        <path d="M61 90V67l7 5C82 56 100 44 124 38l3 11C106 55 90 65 78 79l4 8z" />
        <path d="M275 90V67l-7 5C254 56 236 44 212 38l-3 11c21 6 37 16 49 30l-4 8z" />
        <path fillRule="evenodd" d="M133 115h71c0 12 9 21 21 21v72c-12 0-21 9-21 21h-71c0-12-9-21-22-21v-72c13 0 22-9 22-21zM148 128a24 24 0 0 0-24 24v40a24 24 0 0 0 24 24h40a24 24 0 0 0 24-24v-40a24 24 0 0 0-24-24z" />
      </g>
      <path d="M108 112h118" stroke="#3a2f9c" strokeWidth="2" />
      <path d="M108 111v119" stroke="#c0504a" strokeWidth="2" />
      <text x="235" y="121" fontFamily="Inter, sans-serif" fontSize="24" fill="#1a10b4">Z</text>
      <text x="100" y="256" fontFamily="Inter, sans-serif" fontSize="24" fill="#bb2218">X</text>
      <text transform="translate(158 172) rotate(90)" textAnchor="middle" fontFamily="Roboto, sans-serif" fontSize="24" fontWeight="500" fill="#000">Alzado</text>
    </svg>
  );
}

function Canvas() {
  return (
    <main className="relative min-w-0 grow bg-white">
      <Model />
      <ViewCube />
      <button type="button" aria-label="Opciones de vista" className="absolute right-10 top-[292px] flex items-center gap-4">
        <Icon className="size-[38px]">
          <path d={cube} fill="#ddd" />
          <path d="M3 9l15 7v18L3 26z" fill="#999" stroke="none" />
          <path d="M3 9l15-7 15 7-15 7z" fill="#fff" stroke="none" />
          <path d={cube} />
        </Icon>
        <Caret />
      </button>
      <button type="button" aria-label="Mostrar lista" className="absolute -left-px top-[654px] flex h-[68px] w-[65px] items-center justify-center border-2 border-l-0 border-[#a8a8a8] bg-white pt-1">
        <Icon className="size-9">
          <path d="M1 2l5 5 5-5" strokeWidth="3" />
          <path d="M6 8v27M16 3h20M10 13h26M10 23h26M10 33h26" strokeWidth="2" />
        </Icon>
      </button>
      <div className="absolute bottom-2 right-6 flex items-center gap-8">
        <button type="button" aria-label="Medir">
          <Icon className="size-8" sw={2.500}>
            <path d="M1 19h14c-5-3-6-14 5-16 9-1 14 4 14 10v12c0 6-3 9-9 9H1z" fill="#fff" />
            <ellipse cx="23" cy="12" rx="6" ry="5" />
            <path d="M15 19h9c8 0 10-4 10-8M6 33v-6M12 33v-4M18 33v-6M24 33v-4" strokeWidth="2" />
          </Icon>
        </button>
        <button type="button" aria-label="Ángulo">
          <Icon className="size-10" box="0 0 40 40" sw={2.500}>
            <path d="M2 36v-8a18 20 0 0 1 36 0v8z" />
            <path d="M9 30a11 13 0 0 1 22 0h-7a4 4 0 0 0-8 0z" />
            <path d="M6 28a14 16 0 0 1 28 0" strokeDasharray="2 3" />
          </Icon>
        </button>
        <button type="button" aria-label="Propiedades de masa">
          <Icon className="size-8" sw={2.500}>
            <path d="M6 2h24M18 2v28M8 3L3 20h11L9 3M28 3l-6 17h12L29 3" strokeWidth="2.500" />
            <path d="M2 20h12c0 5-12 5-12 0zM22 20h12c0 5-12 5-12 0z" fill={INK} />
            <path d="M2 34h32" strokeWidth="5" />
          </Icon>
        </button>
      </div>
      <SideTabs />
    </main>
  );
}

function SideTabs() {
  const base = "flex h-[66px] items-center justify-center border-b-2 border-[#a8a8a8]";
  return (
    <div className="absolute -right-[2px] top-[556px] flex w-[67px] flex-col border-l-2 border-t-2 border-[#a8a8a8]">
      <button type="button" aria-label="Apariencia" className={`${base} border-r-2 bg-[#e8e8e8]`}>
        <Icon className="size-10" box="0 0 42 42">
          <path d="M6 28L20 2l9 5-5 11z" fill="#999" />
          <path d="M20 2l9 5-5 11-9-5z" fill="#666" />
          <path d="M10 28l24-15 6 10-8 5z" fill="#ccc" />
          <path d="M34 13l6 10-8 5-6-10z" fill="#999" />
          <rect x="1" y="28" width="40" height="13" rx="2" fill="#fff" />
          <path d="M28 28h13v13H28zM15 28v13" fill="#ddd" />
          <circle cx="8" cy="35" r="2" />
        </Icon>
      </button>
      <button type="button" aria-label="Configuraciones" className={`${base} border-r-2 bg-[#e8e8e8]`}>
        <Icon className="size-10" box="0 0 42 42">
          <path d="M24 9l14 8v17l-14 7-14-7V17z" fill="#fff" strokeWidth="2.500" />
          <path d="M10 17l14 7 14-7M24 24v17" strokeWidth="2.500" />
          <Grid blue />
        </Icon>
      </button>
      <button type="button" aria-label="Propiedades configuradas" className={`${base} border-r-2 bg-[#e8e8e8]`}>
        <Icon className="size-10" box="0 0 42 42">
          <path d="M20 13l12 5v13l-12 6-12-6V18zM8 18l12 6 12-6M20 24v13M33 5c5 0 3 5 3 10 0 4 1 6 4 7-3 1-4 3-4 7 0 5 2 10-3 10M9 39c-5 0-4-5-4-9 0-4-1-6-4-7 3-1 4-2 4-5" />
          <Grid />
        </Icon>
      </button>
      <button type="button" aria-label="Tabla de variables" className={`${base} bg-white`}>
        <VarStudioIcon />
      </button>
    </div>
  );
}

/* ---------- variable tables ---------- */

const STUDIO = [
  ["LayerLength", "Longitud", "110 mm", "Lyer length"],
  ["LayerWidth", "Longitud", "110 mm", "layer width"],
  ["Circle", "Longitud", "100 mm", "Diameter of circle"],
  ["Kerf", "Longitud", "0.14 mm", "Kerf"],
  ["Pin", "Longitud", "10 mm", "Pin to introduce in G..."],
  ["Material", "Longitud", "2.7 mm", "MDF"],
];

const BOX = [
  ["PinEnterLength", "Longitud", "9.86 mm", "(#Pin)-(#Kerf)"],
  ["Gap", "Número", "5", "Number of Gaps"],
  ["PinEnterWidth", "Longitud", "2.56 mm", "(#Material)-(#Kerf)"],
];

function VariableTable({ title, icon, rows }) {
  const cell = "h-[68px] border-2 border-[#a8a8a8]";
  return (
    <section>
      <div className="flex h-[70px] items-center gap-2 border-2 border-r-0 border-[#a8a8a8] bg-[#e8e8e8] pl-3 pr-3 pt-1">
        <button type="button" aria-label={`Contraer ${title}`} className="pt-1"><Chevron /></button>
        <div className="flex items-center gap-[11px]">
          {icon}
          <h2 className="text-[32px] font-medium">{title}</h2>
        </div>
        <button type="button" aria-label={`Menú de ${title}`} className="ml-auto">
          <svg viewBox="0 0 38 8" className="h-2 w-[38px]" fill={INK} aria-hidden="true">
            <circle cx="5" cy="4" r="4" /><circle cx="19" cy="4" r="4" /><circle cx="33" cy="4" r="4" />
          </svg>
        </button>
      </div>
      <div className="-mt-[2px] pr-7">
        <table className="w-full table-fixed border-collapse" aria-label={title}>
          <thead>
            <tr className="bg-[#e8e8e8] text-[28px]">
              {["Nombre", "Tipo de variable", "Valor", "Descripción"].map((h) => (
                <th key={h} scope="col" className={`${cell} font-bold`}>{h}</th>
              ))}
            </tr>
          </thead>
          <tbody>
            {rows.map(([name, type, value, description]) => (
              <tr key={name}>
                <td className={`${cell} truncate pl-3`}>{name}</td>
                <td className={cell}>
                  <div className="flex items-center pr-[10px]">
                    <select aria-label={`Tipo de ${name}`} defaultValue={type} className="min-w-0 grow appearance-none bg-transparent pl-[14px] outline-none">
                      <option>Longitud</option>
                      <option>Número</option>
                    </select>
                    <Caret />
                  </div>
                </td>
                <td className={`${cell} pl-3`}>{value}</td>
                <td className={`${cell} truncate pl-3`}>{description}</td>
              </tr>
            ))}
            <tr>
              <td className={cell}>
                <input aria-label={`Nombre de la nueva variable de ${title}`} placeholder="Nombre" className="w-full bg-transparent pl-3 italic outline-none placeholder:text-[#757575]" />
              </td>
            </tr>
          </tbody>
        </table>
      </div>
    </section>
  );
}

function VariablePanel() {
  return (
    <section className="flex w-[1162px] shrink-0 flex-col border-y-2 border-l-2 border-[#d0d0d0] border-t-[#c8c8c8] border-b-[#c8c8c8] bg-white text-[27px] text-[#333]">
      <div className="mb-1 ml-[10px] flex h-[59px] items-center justify-center border-b-4 border-[#2b509c] pt-2 text-[27px] font-medium text-[#264faa]">
        Tabla de variables
      </div>
      <div className="ml-[10px] flex flex-col gap-5">
        <VariableTable title="Variable Studio" icon={<VarStudioIcon check />} rows={STUDIO} />
        <VariableTable title="Box" rows={BOX} />
      </div>
      <div className="ml-[10px] mt-auto flex h-[80px] items-center border-l-2 border-t-2 border-[#c8c8c8] bg-[#ececec]">
        <div className="flex grow justify-center">
          <div className="flex h-[69px] overflow-hidden rounded-lg border-2 border-[#a8a8a8] bg-white">
            <button type="button" className="flex items-center gap-1 whitespace-nowrap px-5 text-[28px]">
              <VarStudioIcon insert />
              Insertar Variable Studio
            </button>
            <button type="button" aria-label="Más opciones de inserción" className="flex w-12 items-center justify-center border-l-2 border-[#a8a8a8]">
              <Caret up />
            </button>
          </div>
        </div>
        <button type="button" aria-label="Ayuda" className="mr-[22px] text-[#999]">
          <FaQuestionCircle className="size-[26px]" />
        </button>
      </div>
    </section>
  );
}

/* ---------- document tabs ---------- */

const AssemblyIcon = (
  <Icon>
    <path d="M1 1h28l6 8v26H9l-8-10z" fill="#fff" />
    <path d="M1 1h20l5 8v17H9l-8-6z" fill="#999" />
    <path d="M1 1l8 8h26M9 9v26M26 9v17" strokeWidth="1.500" />
  </Icon>
);

const TABS = [
  ["Layer 1", "flex-[286_1_0%]"],
  ["Layer 2", "flex-[287_1_0%]"],
  ["Layer 3", "flex-[287_1_0%]"],
  ["Layer 4", "flex-[287_1_0%]"],
  ["Layer 5", "flex-[287_1_0%]"],
  ["Box", "flex-[241_1_0%]"],
  ["Prueba", "flex-[284_1_0%]"],
  ["Variable Studio", "flex-[382_1_0%]"],
  ["Assembly 1", "flex-[339_1_0%]"],
];

function DocumentTabs() {
  return (
    <nav className="flex h-[60px] shrink-0 bg-[#d3d3d3] pr-1" aria-label="Pestañas">
      <button type="button" aria-label="Añadir pestaña" className="flex w-[78px] shrink-0 items-center pl-[17px]">
        <Icon box="0 0 32 32" className="size-8" sw={5}>
          <path d="M1 16h30M16 1v30" stroke="#666" />
        </Icon>
      </button>
      <div className="flex h-[55px] grow gap-[5px] text-[28px]">
        {TABS.map(([name, size]) => {
          const active = name === "Box";
          const studio = name === "Variable Studio";
          return (
            <button
              key={name}
              type="button"
              aria-current={active ? "page" : undefined}
              className={`${size} min-w-0 rounded-b-[10px] ${active ? "border-b-4 border-[#264faa] bg-white pt-1 text-[#333]" : "bg-[#e8e8e8] text-[#666] shadow-[0_1px_3px_#999]"}`}
            >
              <span className={`flex items-center whitespace-nowrap ${studio ? "pl-5" : "gap-2 pl-6"}`}>
                {studio ? <VarStudioIcon /> : name === "Assembly 1" ? AssemblyIcon : <PartStudioIcon />}
                {name}
              </span>
            </button>
          );
        })}
      </div>
    </nav>
  );
}

export default function App() {
  return (
    <div className="flex min-h-screen flex-col overflow-hidden bg-white font-[Roboto,sans-serif] text-[#333]">
      <BrowserBar />
      <DocumentHeader />
      <div className="flex grow">
        <Rail />
        <div className="flex min-w-0 grow flex-col">
          <Toolbar />
          <div className="flex grow">
            <FeaturePanel />
            <Canvas />
            <VariablePanel />
          </div>
          <DocumentTabs />
        </div>
      </div>
    </div>
  );
}
